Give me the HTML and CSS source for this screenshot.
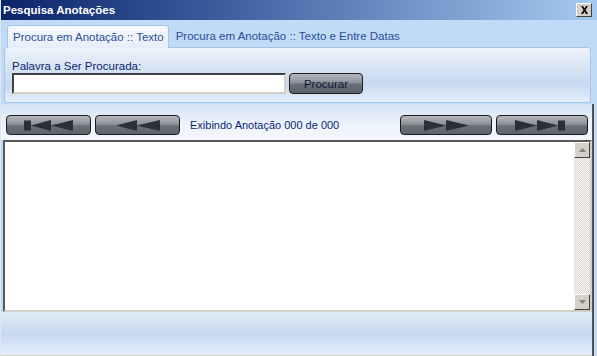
FILE: index.html
```html
<!DOCTYPE html>
<html lang="pt-BR">
<head>
    <meta charset="UTF-8">
    <title>Pesquisa Anotações</title>
    <link rel="stylesheet" href="styles.css">
</head>
<body>

<div class="window">
    <div class="titlebar">
        <span class="title">Pesquisa Anotações</span>
        <span class="close-btn">
            <svg width="9" height="8" viewBox="0 0 9 8"><path d="M1 0h2l1.5 2.5L6 0h2L5.5 4L8 8H6L4.5 5.5L3 8H1l2.5-4z" fill="#000"/></svg>
        </span>
    </div>

    <div class="tab-area">
        <div class="tab-strip">
            <div class="tab active">Procura em Anotação :: Texto</div>
            <div class="tab">Procura em Anotação :: Texto e Entre Datas</div>
        </div>
        <div class="tab-panel">
            <label for="word">Palavra a Ser Procurada:</label>
            <div class="search-row">
                <input type="text" id="word">
                <button class="gray-btn search-btn">Procurar</button>
            </div>
        </div>
    </div>

    <div class="content">
        <div class="nav-row">
            <button class="gray-btn nav-btn">
                <svg width="50" height="11" viewBox="0 0 50 11"><rect x="0" y="0.5" width="7" height="10" fill="#2b3036"/><path d="M7 5.5L27 0v11z M27 5.5L49 0v11z" fill="#2b3036"/></svg>
            </button>
            <button class="gray-btn nav-btn">
                <svg width="44" height="11" viewBox="0 0 44 11"><path d="M0 5.5L21 0v11z M21 5.5L44 0v11z" fill="#2b3036"/></svg>
            </button>
            <span class="counter">Exibindo Anotação 000 de 000</span>
            <button class="gray-btn nav-btn wide">
                <svg width="45" height="11" viewBox="0 0 45 11"><path d="M0 0l22 5.5L0 11z M22 0l23 5.5L22 11z" fill="#2b3036"/></svg>
            </button>
            <button class="gray-btn nav-btn wide">
                <svg width="55" height="11" viewBox="0 0 55 11"><path d="M0 0l22 5.5L0 11z M22 0l21 5.5L22 11z" fill="#2b3036"/><rect x="43" y="0.5" width="7" height="10" fill="#2b3036"/></svg>
            </button>
        </div>

        <div class="memo">
            <div class="memo-text"></div>
            <div class="scrollbar">
                <div class="scroll-btn">
                    <svg width="7" height="4" viewBox="0 0 7 4"><path d="M3.5 0L7 4H0z" fill="#808080"/></svg>
                </div>
                <div class="scroll-track"></div>
                <div class="scroll-btn">
                    <svg width="7" height="4" viewBox="0 0 7 4"><path d="M0 0h7L3.5 4z" fill="#808080"/></svg>
                </div>
            </div>
        </div>

        <div class="footer"></div>
    </div>
</div>

</body>
</html>
```

FILE: styles.css
```css
body {
    margin: 0;
    font-family: 'Liberation Sans', Arial, sans-serif;
    font-size: 11px;
    background-color: #c2dcf8;
}
.window {
    width: 597px;
    height: 356px;
    display: flex;
    flex-direction: column;
    background-color: #c0daf8;
    box-sizing: border-box;
    border-left: 1px solid #dfe6ee;
    overflow: hidden;
}
.titlebar {
    height: 20px;
    flex-shrink: 0;
    display: flex;
    align-items: center;
    justify-content: space-between;
    padding: 0 5px 0 2px;
    background: linear-gradient(to right, #0a246a, #3a5a9c 35%, #a6caf0);
}
.title {
    color: #fff;
    font-weight: 700;
    font-size: 11.5px;
}
.close-btn {
    width: 16px;
    height: 14px;
    box-sizing: border-box;
    background-color: #d4d0c8;
    border: 1px solid;
    border-color: #fff #404040 #404040 #fff;
    display: flex;
    align-items: center;
    justify-content: center;
}
.tab-area {
    height: 84px;
    box-sizing: border-box;
    flex-shrink: 0;
    padding: 5px 6px 0 3px;
    display: flex;
    flex-direction: column;
}
.tab-strip {
    display: flex;
    height: 23px;
    padding-left: 3px;
}
.tab {
    padding: 0 6px 0 5px;
    line-height: 23px;
    color: #2a4e96;
    font-size: 11.5px;
}
.tab.active {
    background: linear-gradient(#f7f9fd, #e4eefa);
    border: 1px solid #a6c4e8;
    border-bottom: none;
    border-radius: 3px 3px 0 0;
    padding: 0 4px 0 5px;
    margin-right: 2px;
    position: relative;
    z-index: 1;
}
.tab-panel {
    flex: 1;
    border: 1px solid #a6c4e8;
    border-radius: 3px;
    background: linear-gradient(#edf2fb, #c6d9ef 65%, #e3edf9);
    padding: 12px 0 0 7px;
    margin-top: -1px;
    margin-bottom: 1px;
}
label {
    display: block;
    color: #0c1f6c;
    font-size: 11.5px;
    line-height: 12px;
}
.search-row {
    display: flex;
    gap: 3px;
    margin-top: 1px;
}
input {
    width: 274px;
    height: 21px;
    box-sizing: border-box;
    border: 2px solid;
    border-color: #404040 #d4d0c8 #d4d0c8 #404040;
    background: #fff;
    margin: 0;
    padding: 0;
}
.gray-btn {
    font-family: 'Liberation Sans', Arial, sans-serif;
    background: linear-gradient(#b4b8bd, #8d9298 45%, #6a7077 55%, #5d636a);
    border: 1px solid #1c1c1c;
    border-radius: 4px;
    margin: 0;
    padding: 0;
    display: flex;
    align-items: center;
    justify-content: center;
}
.search-btn {
    width: 74px;
    height: 21px;
    color: #0b1a3a;
    font-size: 11.5px;
}
.content {
    flex: 1;
    display: flex;
    flex-direction: column;
    border-right: 2px solid #505050;
    margin-right: 3px;
}
.nav-row {
    height: 36px;
    box-sizing: border-box;
    display: flex;
    align-items: center;
    padding: 6px 4px 0 5px;
    background: linear-gradient(#d3e3f6, #eef4fc 60%, #f4f7fc);
}
.nav-btn {
    width: 85px;
    height: 20px;
    margin-right: 4px;
}
.nav-btn.wide {
    width: 92px;
    margin-right: 0;
    margin-left: 4px;
}
.counter {
    color: #0a1f7a;
    font-size: 11px;
    margin-left: 6px;
    flex: 1;
}
.memo {
    height: 172px;
    box-sizing: border-box;
    display: flex;
    background: #fff;
    margin-left: 2px;
    border: 2px solid;
    border-color: #5a5a5a #d4d0c8 #d4d0c8 #5a5a5a;
}
.memo-text {
    flex: 1;
}
.scrollbar {
    width: 16px;
    display: flex;
    flex-direction: column;
}
.scroll-btn {
    height: 16px;
    box-sizing: border-box;
    background: #d4d0c8;
    border: 1px solid;
    border-color: #fff #404040 #404040 #fff;
    display: flex;
    align-items: center;
    justify-content: center;
}
.scroll-track {
    flex: 1;
    background-color: #fff;
    background-image: linear-gradient(45deg, #d4d0c8 25%, transparent 25%, transparent 75%, #d4d0c8 75%), linear-gradient(45deg, #d4d0c8 25%, transparent 25%, transparent 75%, #d4d0c8 75%);
    background-size: 2px 2px;
    background-position: 0 0, 1px 1px;
}
.footer {
    flex: 1;
    background: linear-gradient(#e3edf9, #c6d8ee 50%, #e4eefb);
    border-bottom: 1px solid #d4d0c8;
}
```
